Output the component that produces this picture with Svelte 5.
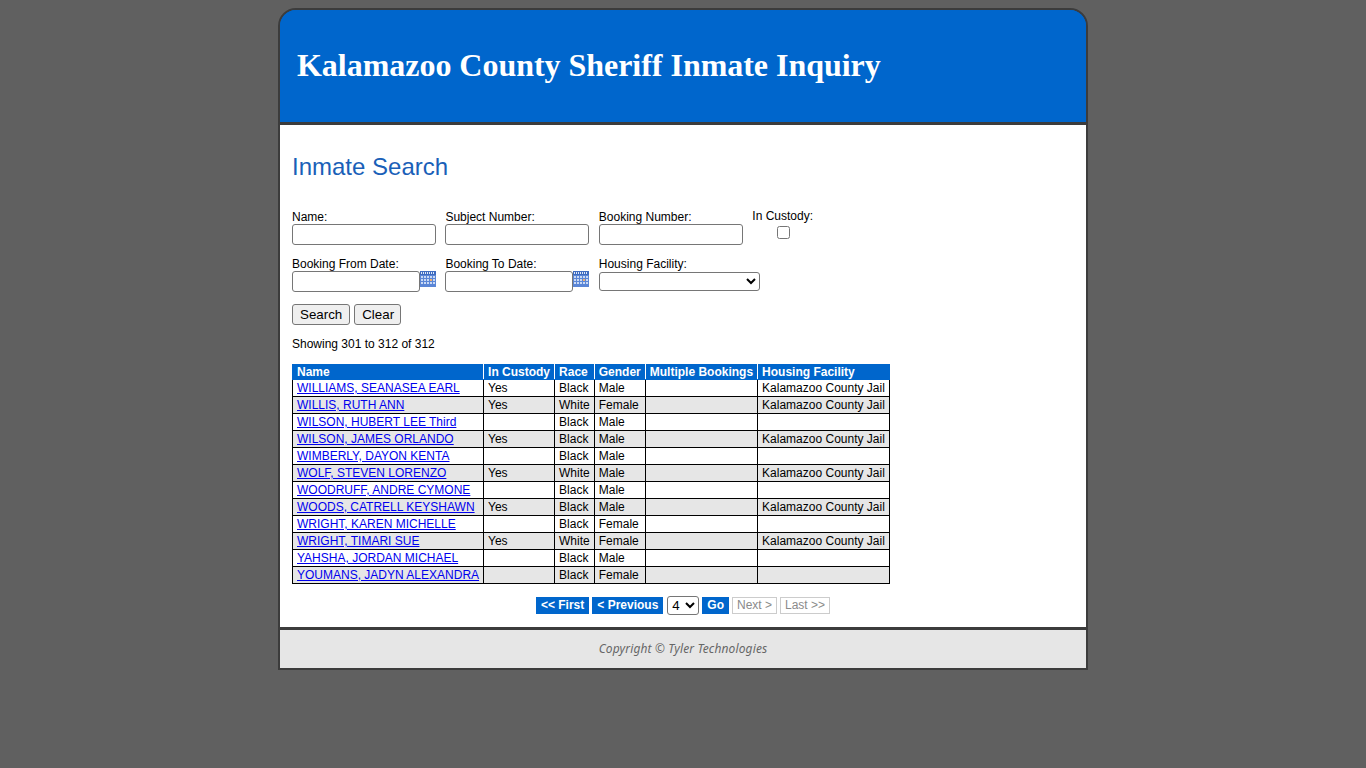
<script>
  const rows = [
    ['WILLIAMS, SEANASEA EARL','Yes','Black','Male','Kalamazoo County Jail'],
    ['WILLIS, RUTH ANN','Yes','White','Female','Kalamazoo County Jail'],
    ['WILSON, HUBERT LEE Third','','Black','Male',''],
    ['WILSON, JAMES ORLANDO','Yes','Black','Male','Kalamazoo County Jail'],
    ['WIMBERLY, DAYON KENTA','','Black','Male',''],
    ['WOLF, STEVEN LORENZO','Yes','White','Male','Kalamazoo County Jail'],
    ['WOODRUFF, ANDRE CYMONE','','Black','Male',''],
    ['WOODS, CATRELL KEYSHAWN','Yes','Black','Male','Kalamazoo County Jail'],
    ['WRIGHT, KAREN MICHELLE','','Black','Female',''],
    ['WRIGHT, TIMARI SUE','Yes','White','Female','Kalamazoo County Jail'],
    ['YAHSHA, JORDAN MICHAEL','','Black','Male',''],
    ['YOUMANS, JADYN ALEXANDRA','','Black','Female','']
  ];
</script>

{#snippet cal()}
  <svg class="cal" width="16" height="16" viewBox="0 0 16 16" aria-hidden="true">
    <rect x="0" y="0" width="16" height="16" fill="#5b86d6"/>
    <rect x="0" y="0" width="16" height="4" fill="#3f6cc0"/>
    <path d="M1 1h1v2H1zM3 1h1v2H3zM5 1h1v2H5zM7 1h1v2H7zM9 1h1v2H9zM11 1h1v2h-1zM13 1h1v2h-1z" fill="#dfe8f8"/>
    <path d="M1 5h2v2H1zM4 5h2v2H4zM7 5h2v2H7zM10 5h2v2h-2zM13 5h2v2h-2zM1 8h2v2H1zM4 8h2v2H4zM7 8h2v2H7zM13 8h2v2h-2zM1 11h2v2H1zM4 11h2v2H4zM7 11h2v2H7zM10 11h2v2h-2zM13 11h2v2h-2z" fill="#c9d9f5"/>
    <rect x="10" y="8" width="2" height="2" fill="#f0b070"/>
  </svg>
{/snippet}

<div class="page">
  <header><h1>Kalamazoo County Sheriff Inmate Inquiry</h1></header>
  <main>
    <h2>Inmate Search</h2>
    <div class="form-row first">
      <div class="field"><label for="n">Name:</label><input id="n" type="text" class="wide"/></div>
      <div class="field"><label for="s">Subject Number:</label><input id="s" type="text" class="wide"/></div>
      <div class="field"><label for="b">Booking Number:</label><input id="b" type="text" class="wide"/></div>
      <div class="field custody"><label for="c">In Custody:</label><input id="c" type="checkbox"/></div>
    </div>
    <div class="form-row second">
      <div class="field"><label for="f">Booking From Date:</label><div class="date"><input id="f" type="text"/>{@render cal()}</div></div>
      <div class="field"><label for="t">Booking To Date:</label><div class="date"><input id="t" type="text"/>{@render cal()}</div></div>
      <div class="field housing"><label for="h">Housing Facility:</label><select id="h"><option></option></select></div>
    </div>
    <div class="actions"><button>Search</button><button class="clear">Clear</button></div>
    <p class="showing">Showing 301 to 312 of 312</p>
    <table>
      <thead>
        <tr><th>Name</th><th>In Custody</th><th>Race</th><th>Gender</th><th>Multiple Bookings</th><th>Housing Facility</th></tr>
      </thead>
      <tbody>
        {#each rows as r}
          <tr>
            <td><a href="#top">{r[0]}</a></td>
            <td>{r[1]}</td><td>{r[2]}</td><td>{r[3]}</td><td></td><td>{r[4]}</td>
          </tr>
        {/each}
      </tbody>
    </table>
    <nav>
      <span class="pg">&lt;&lt; First</span>
      <span class="pg">&lt; Previous</span>
      <select class="pick"><option>4</option></select>
      <span class="pg">Go</span>
      <span class="pg off">Next &gt;</span>
      <span class="pg off">Last &gt;&gt;</span>
    </nav>
  </main>
  <footer>Copyright © Tyler Technologies</footer>
</div>

<style>
  :global(body) { margin: 0; background: #606060; font-family: "Liberation Sans", Arial, sans-serif; font-size: 12px; color: #000; }
  .page { box-sizing: border-box; width: 810px; margin: 8px 0 0 278px; border: 2px solid #3c3c3c; border-radius: 18px 18px 0 0; background: #0066cc; }
  header { box-sizing: content-box; height: 112px; background: #0066cc; border-bottom: 3px solid #3c3c3c; border-radius: 16px 16px 0 0; display: flex; align-items: center; padding-left: 17px; }
  h1 { margin: 0 0 1px; font: bold 32px "Liberation Serif", "Times New Roman", serif; color: #fff; letter-spacing: -0.03px; }
  main { box-sizing: border-box; height: 502px; padding: 28px 12px 12px; background: #fff; }
  h2 { margin: 0 0 28px; font: normal 24px/28px "Liberation Sans", Arial, sans-serif; color: #1a5fb8; }
  .form-row { display: flex; gap: 9.4px; }
  .field { display: flex; flex-direction: column; width: 144px; }
  .field label { line-height: 14px; }
  input[type="text"] { box-sizing: border-box; height: 21px; margin: 0; padding: 1px 2px; border: 1px solid #767676; border-radius: 3px; background: #fff; }
  .wide { width: 144px; }
  .first { height: 48px; align-items: flex-start; }
  .first .field:not(.custody) label { margin-top: 1px; }
  .custody { width: 61px; align-items: center; }
  .custody input { margin: 3px 0 0 1px; width: 13px; height: 13px; }
  .second { height: 47px; }
  .date { display: flex; align-items: flex-start; }
  .date input { width: 128px; }
  .cal { display: block; }
  .housing select { box-sizing: border-box; width: 161px; height: 19px; margin-top: 1px; border: 1px solid #767676; border-radius: 3px; background: #fff; font: 13.33px "Liberation Sans", Arial, sans-serif; }
  .actions { display: flex; gap: 4px; }
  button { box-sizing: border-box; height: 21px; padding: 1px 7px; border: 1px solid #767676; border-radius: 3px; background: #efefef; color: #000; font: 13.33px "Liberation Sans", Arial, sans-serif; }
  .clear { padding-right: 6px; }
  .showing { margin: 12px 0 13px; line-height: 14px; }
  table { border-collapse: collapse; border: 1px solid #000; }
  th { background: #0066cc; color: #fff; font-weight: bold; text-align: left; padding: 0 4px; height: 14px; line-height: 14px; border: 1px solid #0066cc; border-right-color: #fff; white-space: nowrap; }
  th:last-child { border-right-color: #0066cc; }
  td { border: 1px solid #000; padding: 0 4px; height: 16px; line-height: 14px; white-space: nowrap; }
  tbody tr:nth-child(even) td { background: #e6e6e6; }
  a { color: #0000ee; }
  nav { display: flex; justify-content: center; align-items: center; gap: 3px; margin-top: 12px; }
  .pg { box-sizing: border-box; height: 17px; line-height: 15px; padding: 0 4px; background: #0066cc; border: 1px solid #0066cc; color: #fff; font-weight: bold; }
  .off { background: #fff; border-color: #ccc; color: #8a8a8a; font-weight: normal; }
  .pick { box-sizing: border-box; width: 32px; height: 19px; margin: 0 0 0 1px; border: 1px solid #767676; border-radius: 3px; background: #fff; font: 13.33px "Liberation Sans", Arial, sans-serif; }
  footer { box-sizing: border-box; height: 41px; padding-bottom: 2px; border-top: 3px solid #3c3c3c; background: #e6e6e6; display: flex; align-items: center; justify-content: center; font: italic 12px "Noto Sans", sans-serif; letter-spacing: 0.13px; color: #666; }
</style>
